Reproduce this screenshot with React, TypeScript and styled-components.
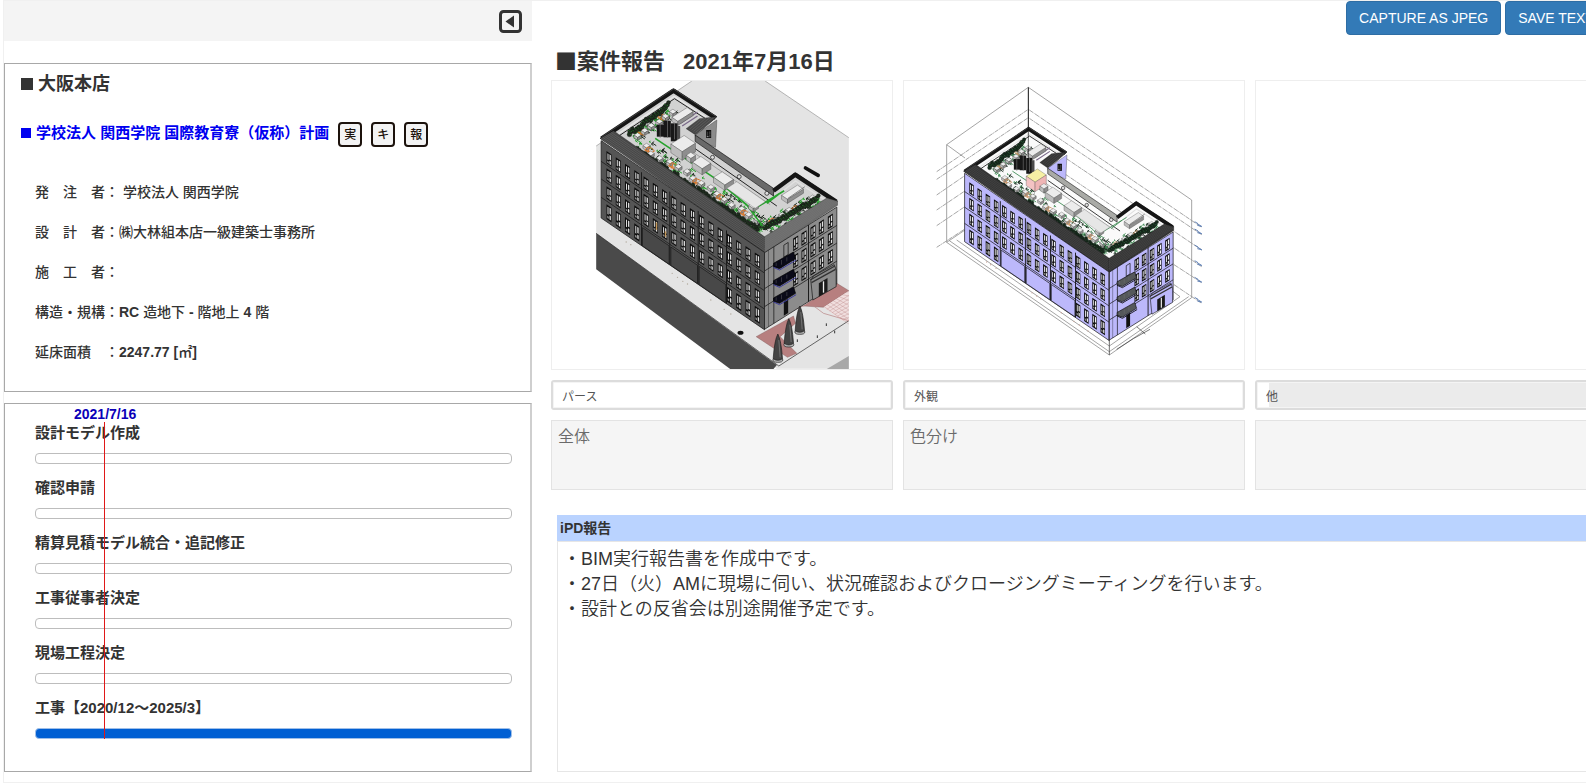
import React from "react";
import styled, { createGlobalStyle } from "styled-components";

const GlobalStyle = createGlobalStyle`
  * { box-sizing: border-box; }
  body {
    margin: 0;
    background: #fff;
    color: #333;
    font-family: "Liberation Sans", "Noto Sans CJK JP", sans-serif;
    font-size: 14px;
    line-height: 20px;
    overflow-x: hidden;
  }
  h1, h2, h3, p, dl, dd, ul, figure { margin: 0; padding: 0; }
`;

const Page = styled.div`
  display: flex;
  gap: 19px;
  margin-left: 3px;
  border: 1px solid #f0f0f0;
  border-right: 0;
  overflow: hidden;
`;

const Sidebar = styled.aside`
  flex: 0 0 528px;
  padding-bottom: 10px;
`;

const SidebarHeader = styled.div`
  display: flex;
  justify-content: flex-end;
  align-items: center;
  height: 40px;
  padding-right: 10px;
  margin-bottom: 22px;
  background: #f4f4f4;
`;

const CollapseButton = styled.button`
  display: flex;
  padding: 0;
  border: 0;
  background: none;
  cursor: pointer;
`;

const Panel = styled.section`
  position: relative;
  border: 1px solid #a8a8a8;
  border-right: 2px solid #cfcfcf;
  & + & { margin-top: 11px; }
`;

const ProjectPanel = styled(Panel)`
  padding: 8px 15px 29px 16px;
`;

const BranchTitle = styled.h2`
  display: flex;
  align-items: center;
  gap: 5px;
  font-size: 18px;
  font-weight: 700;
  line-height: 24px;
`;

const Square = styled.span<{ $size: number }>`
  width: ${(p) => p.$size}px;
  height: ${(p) => p.$size}px;
  background: currentColor;
`;

const ProjectRow = styled.div`
  display: flex;
  align-items: center;
  gap: 9px;
  margin-top: 26px;
`;

const ProjectLink = styled.a`
  display: flex;
  align-items: center;
  gap: 5px;
  padding-bottom: 3px;
  color: #0000f0;
  font-size: 15px;
  font-weight: 700;
  text-decoration: none;
`;

const Badge = styled.button`
  width: 24px;
  height: 25px;
  padding: 0;
  border: 2px solid #1c120c;
  border-radius: 4px;
  background: #f3f3f3;
  color: #1c120c;
  font: 500 12px/20px "Liberation Sans", "Noto Sans CJK JP", sans-serif;
  cursor: pointer;
`;

const Details = styled.dl`
  display: grid;
  gap: 20px;
  margin-top: 35px;
  padding-left: 14px;
`;

const Detail = styled.div`
  display: flex;
  white-space: pre;
  font-weight: 500;
`;

const DetailValue = styled.dd<{ $latin?: boolean }>`
  font-weight: ${(p) => (p.$latin ? 700 : 500)};
`;

const Kanji = styled.span`
  font-weight: 500;
`;

const SchedulePanel = styled(Panel)`
  padding: 19px 18px 32px 30px;
`;

const Steps = styled.ul`
  display: grid;
  gap: 14px;
  list-style: none;
`;

const Step = styled.li`
  display: grid;
  gap: 10px;
  font-size: 15px;
  font-weight: 700;
`;

const Bar = styled.div<{ $filled?: boolean }>`
  height: 11px;
  border: 1px solid ${(p) => (p.$filled ? "#9fbfe8" : "#bdbdbd")};
  border-radius: 4px;
  background: ${(p) => (p.$filled ? "#005fd3" : "#fff")};
`;

const Today = styled.div`
  position: absolute;
  top: 0;
  left: 69px;
  color: #0b00b8;
  font-weight: 700;
`;

const TodayLine = styled.div`
  position: absolute;
  top: 18px;
  bottom: 32px;
  left: 99px;
  width: 1px;
  background: #e01818;
`;

const Main = styled.main`
  flex: 1;
  min-width: 0;
  margin-right: -11px;
`;

const Toolbar = styled.div`
  display: flex;
  justify-content: flex-end;
  gap: 4px;
  margin-right: -10px;
`;

const ActionButton = styled.button`
  height: 34px;
  padding: 0 12px;
  border: 1px solid #2e6da4;
  border-radius: 4px;
  background: #337ab7;
  color: #fff;
  font: 14px/20px "Liberation Sans", sans-serif;
  white-space: nowrap;
  cursor: pointer;
`;

const ReportTitle = styled.h1`
  display: flex;
  gap: 18px;
  padding: 12px 0 3px 4px;
  font-size: 22px;
  line-height: 30px;
  font-weight: 700;
`;

const TitleMark = styled.span`
  font-family: "Noto Sans CJK JP", sans-serif;
  line-height: 1;
`;

const Cards = styled.div`
  display: grid;
  grid-template-columns: repeat(3, minmax(0, 1fr));
  gap: 10px;
`;

const Card = styled.div`
  display: grid;
  gap: 10px;
`;

const Picture = styled.figure`
  display: flex;
  justify-content: center;
  height: 290px;
  border: 1px solid #eeeeee;
  overflow: hidden;
`;

const CaptionInput = styled.input<{ $shaded?: boolean }>`
  width: 100%;
  height: 30px;
  padding: 0 9px;
  border: 2px solid #dcdcdc;
  border-radius: 3px;
  box-shadow: inset 0 0 0 1px #f4f4f4;
  background: ${(p) =>
    p.$shaded ? "linear-gradient(#ebebeb, #ebebeb) 12px 1px / 100% 24px no-repeat" : "#fff"};
  color: #555;
  font: 12px/20px "Liberation Sans", "Noto Sans CJK JP", sans-serif;
`;

const NoteArea = styled.textarea`
  display: block;
  width: 100%;
  height: 70px;
  padding: 4px 6px;
  border: 1px solid #e3e3e3;
  background: #f5f5f5;
  color: #6a6a6a;
  font: 350 16px/24px "Liberation Sans", "Noto Sans CJK JP", sans-serif;
  resize: none;
`;

const Report = styled.section`
  margin: 25px 0 0 6px;
`;

const ReportHeading = styled.h2`
  height: 26px;
  padding-left: 3px;
  background: #bad3ff;
  font-size: 14px;
  font-weight: 700;
  line-height: 26px;
`;

const ReportText = styled.textarea`
  display: block;
  width: 100%;
  height: 231px;
  padding: 5px;
  border: 1px solid #e6e6e6;
  background: #fff;
  color: #333;
  font: 350 18px/25px "Liberation Sans", "Noto Sans CJK JP", sans-serif;
  resize: none;
`;

/* ---------- building drawings ---------- */

type Palette = {
  front: string;
  side: string;
  panel: string;
  eave: string;
  eaveSide: string;
  eaveLine: string;
  deck: string;
  pane: string;
  green: string;
  shrub: string;
  edge: string;
  wall: string;
  balcony: string;
};

const shaded: Palette = {
  front: "#555555", side: "#8c8c8c", panel: "#484848", eave: "#484848", eaveSide: "#6d6d6d", eaveLine: "#7d7d7d",
  deck: "#d2d2d2", pane: "#e2e2e2", green: "#27a32d", shrub: "#1e2a1e", edge: "#1c1c1c",
  wall: "#6a6a6a", balcony: "#0a0a18",
};

const tinted: Palette = {
  front: "#bcb8fb", side: "#bcb8fb", panel: "#bcb8fb", eave: "#353535", eaveSide: "#353535", eaveLine: "#5c5c5c",
  deck: "#fafafa", pane: "#f0f0f4", green: "#3f8d55", shrub: "#162a1c", edge: "#111",
  wall: "#a9aaa6", balcony: "#55585a",
};

function noise(i: number, k: number) {
  const v = Math.sin(i * 12.9898 + k * 78.233) * 43758.5453;
  return v - Math.floor(v);
}

function Window({ x, y, h, pane }: { x: number; y: number; h: number; pane: string }) {
  return (
    <g>
      <rect x={x} y={y} width={15} height={h} fill="#0c0c0c" />
      <rect x={x + 3} y={y + 5} width={3} height={h * 0.5} fill={pane} />
      <rect x={x + 9} y={y + 4} width={4} height={h * 0.42} fill={pane} />
      <rect x={x + 9} y={y + h * 0.62} width={4} height={h * 0.28} fill={pane} />
      <rect x={x + 2} y={y + h * 0.74} width={5} height={h * 0.16} fill="#8a8a8a" />
    </g>
  );
}

function Cube({ x, y, w, d, h, top = "#ececec", left = "#bdbdbd", right = "#8e8e8e" }: {
  x: number; y: number; w: number; d: number; h: number; top?: string; left?: string; right?: string;
}) {
  const a = `${x},${y}`;
  const b = `${x + d},${y - d * 0.64}`;
  const c = `${x + d + w},${y - d * 0.64 + w * 0.68}`;
  const e = `${x + w},${y + w * 0.68}`;
  return (
    <g stroke="#333" strokeWidth={1}>
      <polygon points={`${a} ${b} ${c} ${e}`} fill={top} />
      <polygon points={`${a} ${e} ${x + w},${y + w * 0.68 + h} ${x},${y + h}`} fill={left} />
      <polygon points={`${e} ${c} ${x + d + w},${y - d * 0.64 + w * 0.68 + h} ${x + w},${y + w * 0.68 + h}`} fill={right} />
    </g>
  );
}

/* A planted strip that runs between two roof corners. */
function Garden({ from, to, count, spread, seed, p }: {
  from: [number, number]; to: [number, number]; count: number; spread: number; seed: number; p: Palette;
}) {
  const at = (t: number, off: number, side: number) => ({
    x: from[0] + (to[0] - from[0]) * t + off * 0.9,
    y: from[1] + (to[1] - from[1]) * t + off * side,
  });
  const side = to[1] > from[1] ? -0.62 : 0.66;
  return (
    <g>
      {Array.from({ length: count * 9 }, (_, i) => {
        const q = at(noise(i, seed), (noise(i, seed + 1) - 0.2) * spread, side);
        const s = 4 + noise(i, seed + 2) * 11;
        return (
          <path
            key={i}
            d={`M${q.x} ${q.y} l${s} ${s * 0.66} m-${s / 2} -${s} l-${s * 0.7} ${s * 0.6} l${s / 2} ${s / 3}`}
            stroke={i % 2 === 0 ? p.shrub : p.green}
            strokeWidth={3}
            fill="none"
          />
        );
      })}
      {Array.from({ length: count }, (_, i) => {
        const q = at((i + 0.3) / count, spread * 0.35, side);
        const c = at((i + 0.7) / count, spread * (0.25 + noise(i, seed) * 0.3), side);
        return (
          <g key={i}>
            {i % 3 === 1 && (
              <path
                d={`M${q.x - 12} ${q.y} l9 -10 l12 4 l8 8 l-11 7 z m4 1 l14 3 m-6 -10 l-2 14`}
                stroke={p === shaded ? "#d9782c" : "#cf9a6c"}
                strokeWidth={3}
                fill="none"
              />
            )}
            <Cube x={c.x - 10} y={c.y} w={11} d={11} h={8} />
          </g>
        );
      })}
      {Array.from({ length: count * 3 }, (_, i) => {
        const q = at((i + 0.5) / (count * 3), -3 - noise(i, seed + 5) * 9, side);
        return (
          <g key={i} fill={p.shrub} stroke="#101510" strokeWidth={1}>
            <circle cx={q.x} cy={q.y} r={7} />
            <circle cx={q.x + 7} cy={q.y - 9} r={6} />
            <path d={`M${q.x - 5} ${q.y - 4} l3 3 M${q.x + 2} ${q.y + 1} l4 -3`} stroke={p.green} strokeWidth={2} />
          </g>
        );
      })}
    </g>
  );
}

function Building({ p }: { p: Palette }) {
  const columns = Array.from({ length: 17 }, (_, i) => 16 + i * 27.8);
  const sideColumns = [86, 111, 138, 163, 190];
  return (
    <g strokeLinejoin="round">
      {/* roof deck */}
      <polygon points="60,205 280,57 410,140 345,198 580,360 645,308 772,393 553,530" fill={p.deck} stroke={p.edge} strokeWidth={2} />
      {/* tower face behind the courtyard */}
      <polygon points="345,195 410,150 406,232 350,208" fill={p.side} stroke={p.edge} />
      <Window x={378} y={180} h={24} pane="#444" />
      {/* far parapet */}
      <path d="M64 206 L280 62 L406 144" fill="none" stroke="#151515" strokeWidth={13} />
      <path d="M66 200 L280 57 L408 140" fill="none" stroke="#555" strokeWidth={2} />
      <path d="M98 202 L282 79 L382 144" fill="none" stroke="#e8e8e8" strokeWidth={4} />
      <path d="M104 206 L283 86 L376 146" fill="none" stroke="#222" strokeWidth={3} />
      <polygon points="318,176 358,146 410,140 345,194" fill={p.eave} stroke="#111" />
      {[0, 1, 2, 3].map((i) => (
        <line key={i} x1={328 + i * 6} y1={178 + i * 3} x2={372 + i * 9} y2={140 + i} stroke={p.eaveLine} />
      ))}
      {/* long courtyard wall */}
      <polygon points="345,195 580,355 580,378 345,214" fill={p.wall} stroke="#111" strokeWidth={2} />
      <path d="M345 236 L590 408" stroke="#222" strokeWidth={3} />
      <path d="M338 246 L570 404" stroke="#888" strokeWidth={2} />
      <g fill="#ddd" stroke="#111" strokeWidth={2}>
        <circle cx={397} cy={262} r={6} />
        <circle cx={477} cy={320} r={6} />
        <circle cx={560} cy={370} r={6} />
      </g>
      {/* near wing parapet */}
      <path d="M580 362 L645 314 L768 395" fill="none" stroke="#151515" strokeWidth={13} />
      <path d="M592 376 L646 333 L738 392" fill="none" stroke="#e0e0e0" strokeWidth={4} />
      {/* plant and services */}
      <Garden from={[150, 200]} to={[272, 112]} count={6} spread={24} seed={3} p={p} />
      <Garden from={[158, 232]} to={[538, 484]} count={16} spread={54} seed={11} p={p} />
      <Garden from={[560, 480]} to={[722, 392]} count={7} spread={-40} seed={23} p={p} />
      <path d="M225 205 L400 322 L500 405 L545 465 M520 418 L612 362 M560 400 L596 372" fill="none" stroke={p.green} strokeWidth={p === shaded ? 5 : 3} />
      <path d="M300 160 L352 126 M306 168 L352 138" stroke="#7b6a8a" strokeWidth={4} />
      <Cube x={275} y={142} w={18} d={46} h={12} />
      <g fill="#171717">
        <rect x={230} y={164} width={26} height={36} />
        <rect x={250} y={152} width={22} height={50} />
        <rect x={272} y={160} width={20} height={54} />
        <rect x={290} y={168} width={10} height={40} fill="#4a4a4a" />
      </g>
      <path d="M240 160 v44 M262 150 v54 M283 158 v50" stroke="#777" strokeWidth={2} />
      {p === tinted ? (
        <Cube x={272} y={222} w={30} d={38} h={32} top="#f6f0a4" left="#f4c3c3" right="#efb5b5" />
      ) : (
        <Cube x={272} y={222} w={34} d={40} h={26} />
      )}
      <Cube x={336} y={276} w={30} d={26} h={18} />
      <Cube x={400} y={322} w={34} d={26} h={16} />
      <Cube x={318} y={256} w={14} d={14} h={14} />
      <Cube x={505} y={406} w={14} d={16} h={10} />
      <polygon points="440,355 470,335 555,395 525,415" fill="#e6e6e6" stroke="#666" />
      <Cube x={604} y={376} w={18} d={48} h={12} />
      <path d="M622 386 L674 350" stroke="#555" strokeWidth={2} />
      {/* sloping eaves */}
      <polygon points="60,205 100,182 553,500 553,550" fill={p.eave} stroke="#111" />
      <polygon points="553,500 740,384 772,393 772,406 553,550" fill={p.eaveSide} stroke="#111" />
      {[1, 2, 3, 4, 5, 6, 7].map((i) => (
        <g key={i} stroke={p.eaveLine} strokeWidth={1}>
          <line x1={98 - i * 5} y1={184 + i * 3} x2={553} y2={500 + i * 6} />
          <line x1={553} y1={500 + i * 6} x2={742 + i * 4} y2={384 + i * 2} />
        </g>
      ))}
      {/* front facade */}
      <g transform="matrix(1 0.684 0 1 63 212)">
        <rect width={490} height={232} fill={p.front} stroke={p.edge} strokeWidth={2} />
        {[62, 115, 170].map((y) => (
          <line key={y} x1={0} x2={490} y1={y} y2={y} stroke={p.edge} strokeWidth={2} />
        ))}
        {columns.map((x) =>
          [20, 72, 126].map((y) => <Window key={`${x}-${y}`} x={x} y={y} h={37} pane={p.pane} />)
        )}
        {columns.map((x, i) =>
          i < 4 || i > 12 ? <Window key={x} x={x} y={180} h={44} pane={p.pane} /> : null
        )}
        {[124, 209, 294].map((x) => (
          <rect key={x} x={x} y={176} width={80} height={55} fill={p.panel} stroke={p.edge} strokeWidth={2} />
        ))}
        {[121, 206, 291, 376].map((x) => (
          <line key={x} x1={x} x2={x} y1={12} y2={232} stroke={p.edge} strokeWidth={3} />
        ))}
        {p === shaded && (
          <g fill="#c79a5a">
            <rect x={164} y={132} width={4} height={22} />
            <rect x={191} y={140} width={4} height={16} />
          </g>
        )}
      </g>
      {/* side facade */}
      <g transform="matrix(1 -0.63 0 1 553 548)">
        <rect width={217} height={230} fill={p.side} stroke={p.edge} strokeWidth={2} />
        {[55, 108, 162].map((y) => (
          <line key={y} x1={0} x2={217} y1={y} y2={y} stroke={p.edge} strokeWidth={2} />
        ))}
        <line x1={12} x2={12} y1={0} y2={230} stroke={p.edge} />
        <line x1={28} x2={28} y1={0} y2={230} stroke={p.edge} strokeWidth={2} />
        <line x1={132} x2={132} y1={0} y2={230} stroke={p.edge} strokeWidth={3} />
        {sideColumns.map((x) =>
          [12, 64, 118].map((y) => <Window key={`${x}-${y}`} x={x} y={y} h={38} pane={p.pane} />)
        )}
        <rect x={58} y={14} width={13} height={36} fill={p.side} stroke={p.edge} strokeWidth={2} />
        <rect x={58} y={182} width={13} height={44} fill="#111" />
      </g>
      {/* balconies */}
      {[580, 632, 684].map((y) => (
        <g key={y}>
          <polygon points={`580,${y} 640,${y - 34} 646,${y - 14} 598,${y + 16} 580,${y + 10}`} fill={p.balcony} stroke="#000" strokeWidth={2} />
          <path d={`M588 ${y - 2} v10 M604 ${y - 10} v14 M620 ${y - 18} v12`} stroke="#888" strokeWidth={1} />
          <path d={`M580 ${y + 12} L598 ${y + 20} L648 ${y - 10}`} fill="none" stroke={p === shaded ? "#3c3c9c" : "#111"} strokeWidth={3} />
        </g>
      ))}
      {/* entrance porch */}
      <polygon points="692,632 700,618 762,584 768,600 768,650 698,690" fill={p.side} stroke="#111" strokeWidth={2} />
      <path d="M690 630 L764 588 M694 638 L766 598" stroke="#333" strokeWidth={4} />
      <polygon points="716,640 742,624 742,664 716,680" fill="#1a1a1a" />
      <path d="M730 634 V668" stroke="#eee" strokeWidth={4} />
    </g>
  );
}

function Tree({ x, y }: { x: number; y: number }) {
  return (
    <g stroke="#1d1d1d" strokeWidth={2}>
      <ellipse cx={x} cy={y} rx={15} ry={7} fill="#b5b5b5" />
      <path d={`M${x - 14} ${y - 4} Q${x - 10} ${y - 60} ${x} ${y - 78} Q${x + 10} ${y - 60} ${x + 14} ${y - 4} Q${x} ${y + 6} ${x - 14} ${y - 4}z`} fill="#444" />
      <path d={`M${x + 3} ${y - 60} L${x + 7} ${y - 8}`} stroke="#888" />
    </g>
  );
}

function PerspectiveDrawing() {
  return (
    <svg width="253" height="288" viewBox="48 33 758 864" role="img" aria-label="パース">
      <polygon points="48,228 335,33 555,33 806,203 806,896 590,896 48,490" fill="#e4e4e4" />
      <path d="M335 33 L48 228 M555 33 L806 203" stroke="#777" strokeWidth={1.5} fill="none" />
      <polygon points="48,490 590,885 580,897 450,897 48,598" fill="#4a4a4a" />
      <path d="M48 490 L596 888 L806 752" stroke="#222" strokeWidth={2} fill="none" />
      <polygon points="740,897 806,858 806,897" fill="#a8a8a8" />
      <polygon points="670,708 770,640 806,662 730,712" fill="#b77f7f" stroke="#6d4545" />
      <polygon points="730,712 806,662 806,752 786,752" fill="#f0dede" />
      {Array.from({ length: 8 }, (_, i) => (
        <path key={i} d={`M${732 + i * 9} ${710 - i * 6} L806 ${762 - i * 14} M${740 + i * 8} ${718 + i * 5} L806 ${676 + i * 11}`} stroke="#b77f7f" strokeWidth={1} />
      ))}
      <polygon points="528,800 640,738 646,760 600,800 650,850 622,862" fill="#b77f7f" stroke="#6d4545" />
      <path d="M640 720 L690 700 L730 730 L806 752" stroke="#b77f7f" strokeWidth={2} fill="none" />
      <Building p={shaded} />
      <path d="M676 294 L714 316" stroke="#111" strokeWidth={11} strokeLinecap="round" />
      <ellipse cx={481} cy={788} rx={9} ry={6} fill="#111" />
      <Tree x={659} y={786} />
      <Tree x={626} y={824} />
      <Tree x={593} y={870} />
      {[[138, 516], [152, 524], [276, 610], [292, 622], [308, 634], [322, 642], [392, 690], [432, 718], [452, 732]].map(([x, y]) => (
        <circle key={x} cx={x} cy={y} r={2} fill="#b0a79a" />
      ))}
      {[[710, 796], [737, 760], [762, 782], [650, 808]].map(([x, y]) => (
        <rect key={x} x={x} y={y} width={3} height={8} fill="#333" />
      ))}
    </svg>
  );
}

function ExteriorDrawing() {
  const levels = [465, 487, 535, 582, 632, 692];
  return (
    <svg width="276" height="288" viewBox="48 33 828 864" role="img" aria-label="外観">
      <g fill="none" stroke="#777" strokeWidth={2}>
        <path d="M80 224 L325 52 L815 390 V683 L568 855 L80 517 Z" />
        <path d="M80 224 L135 264" />
        <path d="M80 517 L135 480 M110 510 L568 828 L780 680 L740 650 M88 512 L568 845 L806 680" />
        <g strokeDasharray="14 2 3 2">
          <path d="M50 305 L325 118 L845 472" />
          <path d="M50 328 L325 143 L845 494" />
          <path d="M50 375 L133 318 M438 265 L845 540" />
          <path d="M50 420 L133 364 M435 312 L845 590" />
          <path d="M50 467 L133 411 M762 584 L845 638" />
          <path d="M50 532 L133 478 M762 644 L845 700" />
        </g>
      </g>
      <path d="M325 52 V180" stroke="#111" strokeWidth={3} />
      <g transform="translate(78 122) scale(0.885)">
        <Building p={tinted} />
      </g>
      <path d="M325 170 V275" stroke="#111" strokeWidth={2} />
      <path d="M568 600 V855" stroke="#222" strokeWidth={2} />
      {levels.map((y) => (
        <path key={y} d={`M824 ${y - 10} l10 6 M832 ${y - 4} l14 9 m-14 -4 l12 3`} stroke="#6484b8" strokeWidth={3} fill="none" />
      ))}
      <path d="M590 838 L640 806 L690 778 M650 770 L676 792" stroke="#333" strokeWidth={2} fill="none" />
      {[200, 212, 228, 322, 336, 350, 362, 424, 462, 478, 504].map((x) => (
        <circle key={x} cx={x} cy={440 + x * 0.68} r={2} fill="#c9a79c" />
      ))}
    </svg>
  );
}

/* ---------- page ---------- */

const steps = [
  { name: "設計モデル作成" },
  { name: "確認申請" },
  { name: "精算見積モデル統合・追記修正" },
  { name: "工事従事者決定" },
  { name: "現場工程決定" },
  { name: "工事【2020/12～2025/3】", filled: true },
];

const cards = [
  { caption: "パース", note: "全体", drawing: <PerspectiveDrawing /> },
  { caption: "外観", note: "色分け", drawing: <ExteriorDrawing /> },
  { caption: "他", note: "", drawing: null },
];

const reportBody = [
  "・BIM実行報告書を作成中です。",
  "・27日（火）AMに現場に伺い、状況確認およびクロージングミーティングを行います。",
  "・設計との反省会は別途開催予定です。",
].join("\n");

export default function App() {
  return (
    <>
      <GlobalStyle />
      <Page>
        <Sidebar>
          <SidebarHeader>
            <CollapseButton type="button" aria-label="閉じる">
              <svg width="23" height="23" viewBox="0 0 23 23">
                <rect x="1.5" y="1.5" width="20" height="20" rx="3" fill="#f4f4f4" stroke="#333" strokeWidth="3" />
                <path d="M15 5.5 V17.500 L6.500 11.500 Z" fill="#333" />
              </svg>
            </CollapseButton>
          </SidebarHeader>

          <ProjectPanel>
            <BranchTitle>
              <Square $size={12} />
              大阪本店
            </BranchTitle>
            <ProjectRow>
              <ProjectLink href="#project">
                <Square $size={10} />
                学校法人 関西学院 国際教育寮（仮称）計画
              </ProjectLink>
              <Badge type="button">実</Badge>
              <Badge type="button">キ</Badge>
              <Badge type="button">報</Badge>
            </ProjectRow>
            <Details>
              <Detail><dt>発　注　者：</dt><DetailValue> 学校法人 関西学院</DetailValue></Detail>
              <Detail><dt>設　計　者：</dt><DetailValue>㈱大林組本店一級建築士事務所</DetailValue></Detail>
              <Detail><dt>施　工　者：</dt><DetailValue /></Detail>
              <Detail>
                <dt>構造・規構：</dt>
                <DetailValue $latin>RC <Kanji>造地下</Kanji> - <Kanji>階地上</Kanji> 4 <Kanji>階</Kanji></DetailValue>
              </Detail>
              <Detail><dt>延床面積　：</dt><DetailValue $latin>2247.77 [<Kanji>㎡</Kanji>]</DetailValue></Detail>
            </Details>
          </ProjectPanel>

          <SchedulePanel>
            <Steps>
              {steps.map((step) => (
                <Step key={step.name}>
                  {step.name}
                  <Bar $filled={step.filled} />
                </Step>
              ))}
            </Steps>
            <TodayLine />
            <Today>2021/7/16</Today>
          </SchedulePanel>
        </Sidebar>

        <Main>
          <Toolbar>
            <ActionButton type="button">CAPTURE AS JPEG</ActionButton>
            <ActionButton type="button">SAVE TEXT</ActionButton>
          </Toolbar>
          <ReportTitle>
            <span><TitleMark>■</TitleMark>案件報告</span>
            <time dateTime="2021-07-16">2021年7月16日</time>
          </ReportTitle>
          <Cards>
            {cards.map((card) => (
              <Card key={card.caption}>
                <Picture>{card.drawing}</Picture>
                <CaptionInput
                  type="text"
                  aria-label="画像タイトル"
                  defaultValue={card.caption}
                  $shaded={!card.drawing}
                />
                <NoteArea aria-label={`${card.caption} コメント`} defaultValue={card.note} />
              </Card>
            ))}
          </Cards>
          <Report>
            <ReportHeading id="report-heading">iPD報告</ReportHeading>
            <ReportText aria-labelledby="report-heading" defaultValue={reportBody} />
          </Report>
        </Main>
      </Page>
    </>
  );
}
